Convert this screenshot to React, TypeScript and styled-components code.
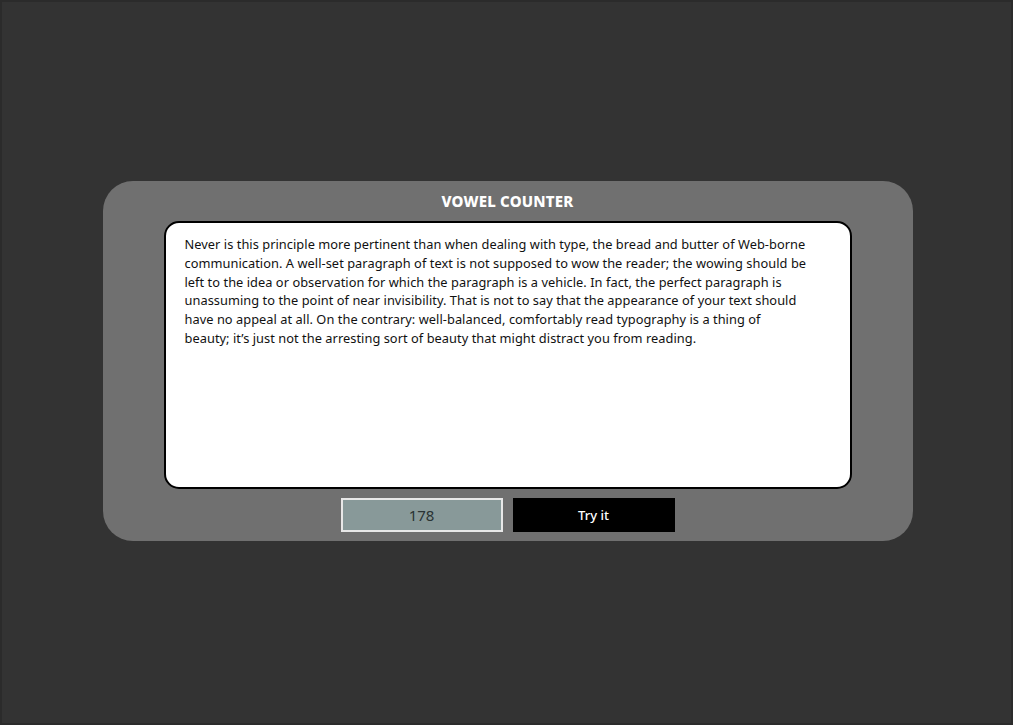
import React, { useState } from "react";
import styled, { createGlobalStyle } from "styled-components";

const GlobalStyle = createGlobalStyle`
  html, body {
    margin: 0;
    padding: 0;
    background: #333333;
  }
  * {
    box-sizing: border-box;
  }
`;

const Page = styled.div`
  min-height: 100vh;
  border: 2px solid #2b2b2b;
  padding-bottom: 3px;
  display: flex;
  align-items: center;
  justify-content: center;
  font-family: "Noto Sans", "Liberation Sans", sans-serif;
`;

const Card = styled.div`
  width: 810px;
  height: 360px;
  margin-left: 2px;
  background: #707070;
  border-radius: 30px;
  display: flex;
  flex-direction: column;
  align-items: center;
  padding-top: 11px;
`;

const Title = styled.h1`
  margin: 0 0 11px;
  font-size: 15px;
  font-weight: 800;
  color: #ffffff;
  line-height: 18px;
  letter-spacing: 0.2px;
`;

const TextBox = styled.textarea`
  width: 688px;
  height: 268px;
  border: 2px solid #000;
  border-radius: 15px;
  background: #fff;
  padding: 12px 8px 10px 19px;
  font-family: inherit;
  font-size: 12.8px;
  letter-spacing: 0.05px;
  line-height: 18.8px;
  color: #111;
  resize: none;
  outline: none;
`;

const Controls = styled.div`
  display: flex;
  gap: 10px;
  margin-top: 9px;
`;

const Output = styled.div`
  width: 162px;
  height: 34px;
  background: #889999;
  border: 2px solid #e8e8e8;
  display: flex;
  align-items: center;
  justify-content: center;
  font-size: 15px;
  color: #2a3333;
`;

const Button = styled.button`
  width: 162px;
  height: 34px;
  background: #000;
  border: none;
  color: #fff;
  font-family: inherit;
  font-size: 13px;
  font-weight: 500;
  cursor: pointer;
`;

const sample = [
  "Never is this principle more pertinent than when dealing with type, the bread and butter of Web-borne",
  "communication. A well-set paragraph of text is not supposed to wow the reader; the wowing should be",
  "left to the idea or observation for which the paragraph is a vehicle. In fact, the perfect paragraph is",
  "unassuming to the point of near invisibility. That is not to say that the appearance of your text should",
  "have no appeal at all. On the contrary: well-balanced, comfortably read typography is a thing of",
  "beauty; it\u2019s just not the arresting sort of beauty that might distract you from reading.",
].join("\n");

function countVowels(text: string) {
  const m = text.match(/[aeiou]/gi);
  return m ? m.length : 0;
}

function App() {
  const [text, setText] = useState<string>(sample);
  const [count, setCount] = useState<number>(178);

  return (
    <Page>
      <GlobalStyle />
      <Card>
        <Title>VOWEL COUNTER</Title>
        <TextBox value={text} onChange={(e) => setText(e.target.value)} />
        <Controls>
          <Output>{count}</Output>
          <Button onClick={() => setCount(countVowels(text))}>Try it</Button>
        </Controls>
      </Card>
    </Page>
  );
}

export default App;
